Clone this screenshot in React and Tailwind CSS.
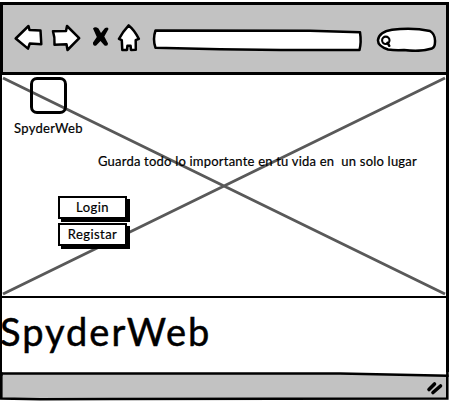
const ink = { fill: "#fff", stroke: "#000", strokeWidth: 2.5, strokeLinejoin: "round", strokeLinecap: "round" };

function Toolbar() {
  return (
    <header className="flex h-[73px] w-[449px] items-start border-x-[3px] border-t-[3px] border-b-[3px] border-black bg-[#c2c2c2] pl-[11px] pt-[19px]">
      <svg className="h-[28px] w-[30px] shrink-0" viewBox="14 24 30 28" {...ink}>
        <path d="M15.7 38.5 L28.5 26 L29.5 30 L40.5 30.5 L41.3 44.2 L29.8 43.5 L28 48.6 Z" />
      </svg>
      <svg className="ml-[7px] h-[28px] w-[30px] shrink-0" viewBox="51 24 30 28" {...ink}>
        <path d="M53 31.3 L66 31 L67 26 L79.2 38.2 L67.5 50 L66.5 44.2 L54.5 44.7 Q55 37 53 31.3 Z" />
      </svg>
      <svg className="ml-[11px] h-[28px] w-[17px] shrink-0" viewBox="92 24 17 28">
        <path d="M93 28.5 Q95 26 98.5 28.5 L101 33 L105 28 Q108.3 26.5 108.5 29 L104.3 36.5 L108 43.5 Q108 46.5 104.5 45.4 L100.5 41 L96.2 45.4 Q92.6 46.5 93 42.5 L96.8 37 Z" />
      </svg>
      <svg className="ml-[8px] h-[28px] w-[24px] shrink-0" viewBox="117 24 24 28" {...ink}>
        <path d="M128.7 25.4 Q134.5 30 138.8 38.8 L135.7 40.2 L135.8 49.8 L131 50 L130.6 45.8 L127.4 45.8 L127 50 L122.3 50 L121.8 40.2 L119 38.8 Q123 31.5 128.7 25.4 Z" />
      </svg>
      <svg className="ml-[10px] h-[28px] w-[213px] shrink-0" viewBox="151 26 213 28" {...ink}>
        <path d="M155.5 32.5 L310 32.7 L360 34.2 Q361.5 44 359.5 52 L281 52 L220 51.2 L155.5 49.8 Q152.5 41 155.5 32.5 Z" />
      </svg>
      <svg className="ml-[11px] h-[28px] w-[63px] shrink-0" viewBox="375 26 63 28" {...ink}>
        <path d="M392 31.8 Q412 29 430 33 Q435.5 36.5 435 44 Q435 49 432 50.5 Q420 54.2 404 52 Q395 52.5 388 51.5 Q377.5 48 378 42 Q379 34 392 31.8 Z" />
        <circle cx="385.8" cy="42.3" r="3.7" strokeWidth="2.1" />
        <path d="M387.5 44.8 L389.3 47.8" />
      </svg>
    </header>
  );
}

function SketchButton({ children }) {
  return (
    <button className="flex h-[23px] w-[69px] items-center justify-center border-2 border-black bg-white text-[13px] leading-none tracking-[0.45px] shadow-[3px_3px_0_#000] [-webkit-text-stroke:0.2px_#000]">
      {children}
    </button>
  );
}

function Hero() {
  return (
    <main className="relative h-[223px] w-[449px] border-l-[2px] border-r-[3px] border-b-[2px] border-black bg-white">
      <svg className="absolute left-0 top-0 h-[221px] w-[444px]" viewBox="2 75 444 221">
        <path d="M3 78 L445 294 M3 294 L445 78" stroke="#595959" strokeWidth="2.9" />
      </svg>
      <div className="relative flex flex-col items-start">
        <div className="ml-[28px] mt-[2px] h-[37px] w-[37px] rounded-[7px] border-[3px] border-black" />
        <p className="ml-[12px] mt-[6px] whitespace-nowrap text-[13px] leading-[16px] tracking-[0.3px] [-webkit-text-stroke:0.2px_#000]">SpyderWeb</p>
        <p className="ml-[96px] mt-[17px] whitespace-pre text-[13px] leading-[16px] tracking-[0.21px] [-webkit-text-stroke:0.2px_#000]">
          {"Guarda todo lo importante en tu vida en  un solo lugar"}
        </p>
        <div className="ml-[56px] mt-[27px] flex flex-col gap-[4px]">
          <SketchButton>Login</SketchButton>
          <SketchButton>Registar</SketchButton>
        </div>
      </div>
    </main>
  );
}

export default function App() {
  return (
    <div className="flex h-[404px] w-[449px] flex-col overflow-hidden bg-white pt-[2px] font-['Lato',sans-serif] text-black">
      <Toolbar />
      <Hero />
      <section className="h-[74px] w-[449px] border-l-2 border-r-[3px] border-black bg-white pt-[10px]">
        <h1 className="-ml-[2px] whitespace-nowrap text-[38px] leading-[46px] tracking-[2px] [-webkit-text-stroke:0.5px_#000]">SpyderWeb</h1>
      </section>
      <svg className="h-[32px] w-[449px] shrink-0" viewBox="0 372 449 32">
        <path d="M1.3 373.5 L340 373.5 L447.3 375.8 L447.3 398.5 L110 399 L40 399.3 L1.3 398.5 Z" fill="#c2c2c2" stroke="#000" strokeWidth="2.6" />
        <path d="M1.2 372 V376 M447.4 372 V377" stroke="#000" strokeWidth="2.6" />
        <path d="M429 389.5 L434.5 384 M433 392.5 L440.5 386" stroke="#000" strokeWidth="3.6" strokeLinecap="round" />
      </svg>
    </div>
  );
}
